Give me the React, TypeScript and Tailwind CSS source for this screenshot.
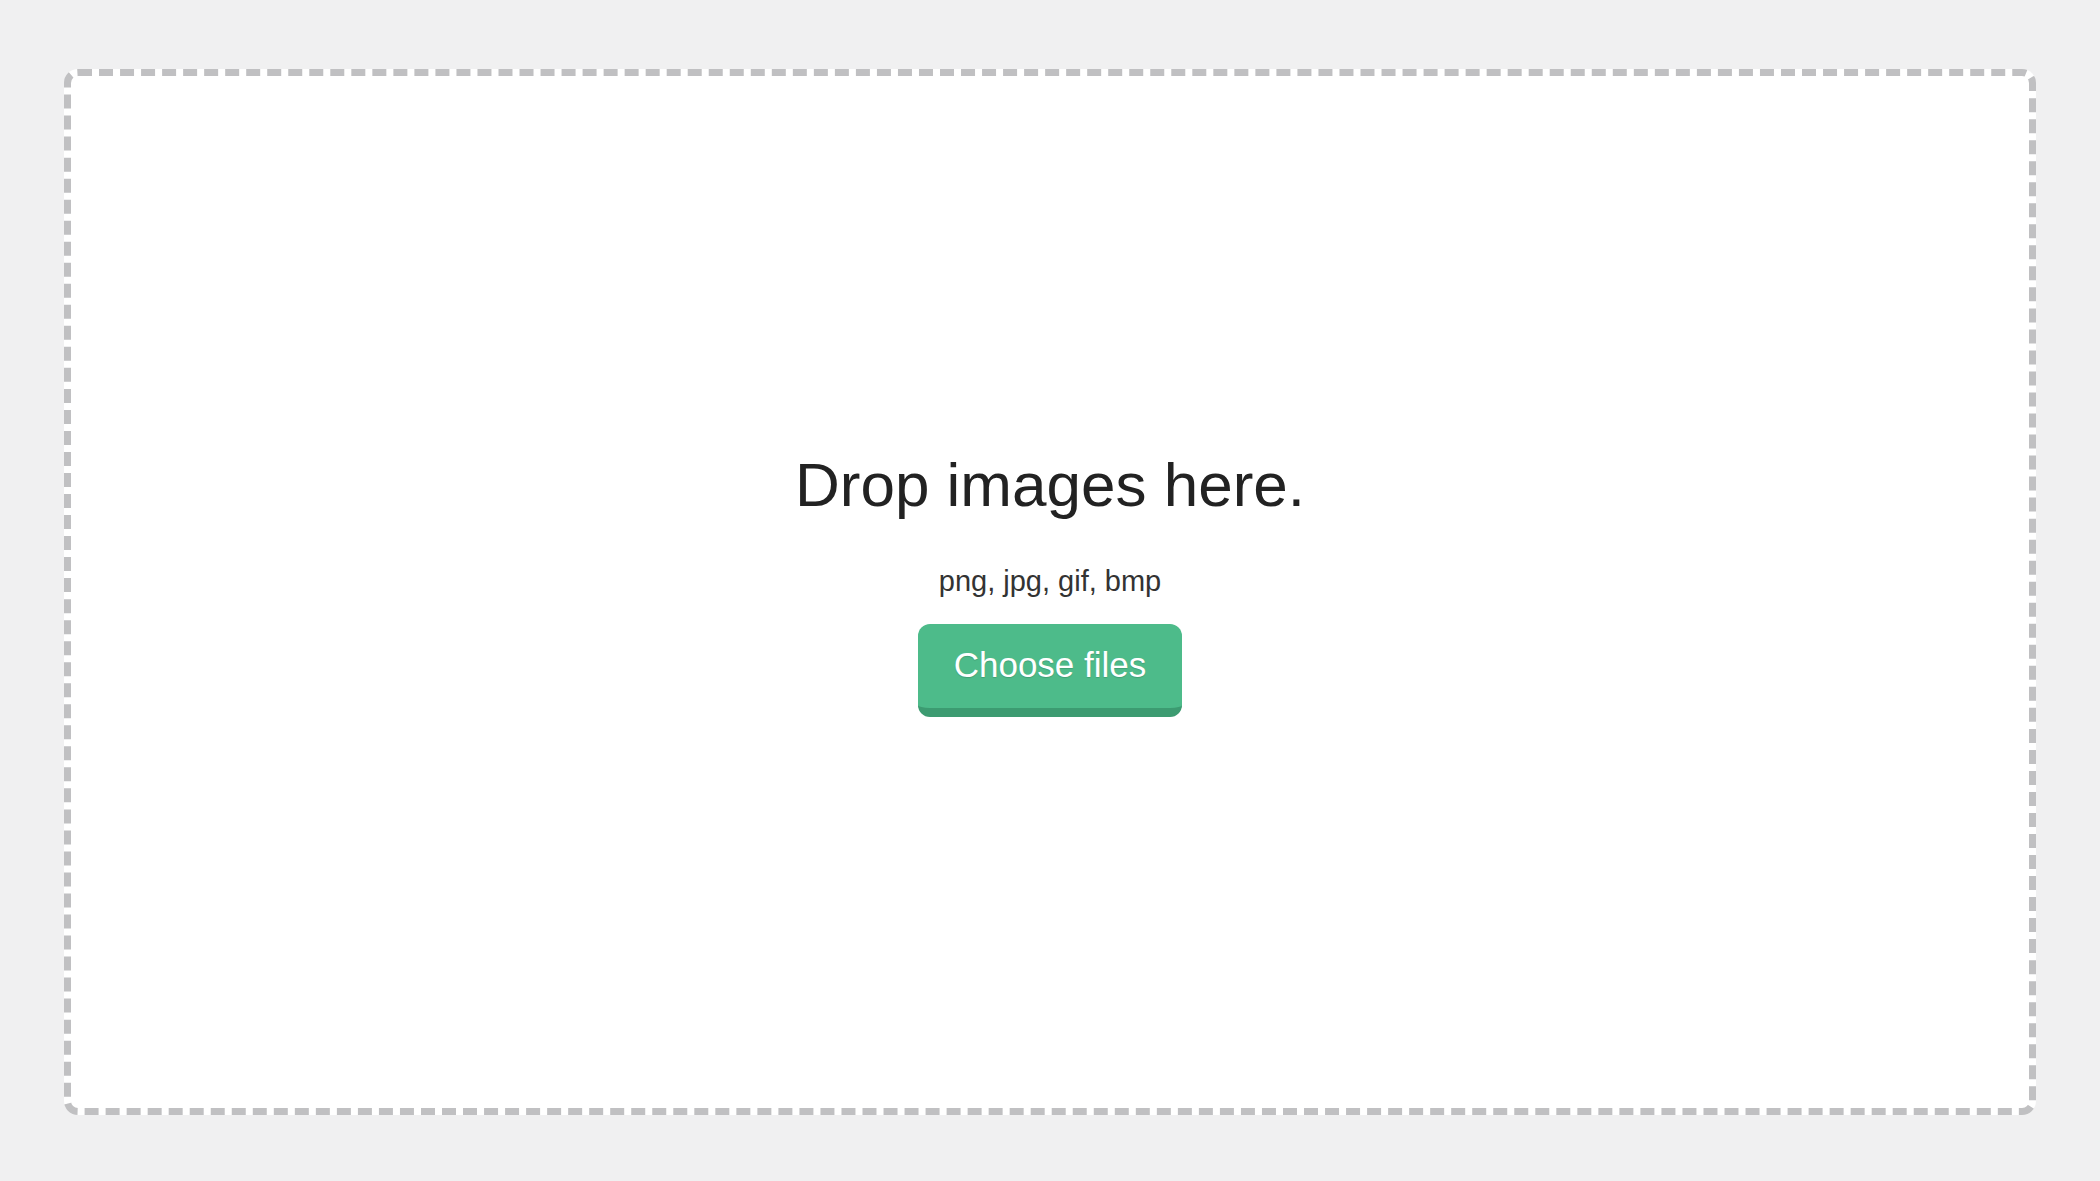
export default function App() {
  return (
    <div
      className="min-h-screen bg-[#f0f0f1] px-[64px] pt-[69px] pb-[66px] flex"
      style={{ fontFamily: '"Liberation Sans", Arial, sans-serif' }}
    >
      <div className="flex-1 flex flex-col items-center justify-center bg-white border-[7px] border-dashed border-[#c0c0c2] rounded-[14px] pb-[14px]">
        <h1 className="text-[62px] leading-none text-[#222222]">Drop images here.</h1>
        <p className="mt-[51px] text-[29px] leading-none text-[#333333]">png, jpg, gif, bmp</p>
        <button className="mt-[28px] w-[264px] h-[93px] flex items-center justify-center rounded-[12px] bg-[#4dbb8a] border-b-[9px] border-[#3c9b71] text-white text-[35px] [text-shadow:0_1px_1px_rgba(0,0,0,0.15)]">
          Choose files
        </button>
      </div>
    </div>
  )
}
